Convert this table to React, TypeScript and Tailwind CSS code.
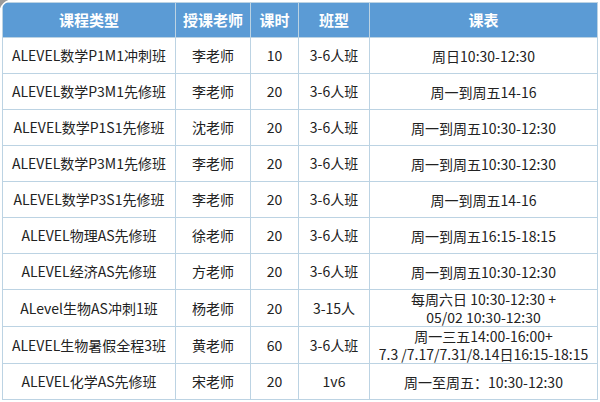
const rows: { name: string; teacher: string; hours: string; size: string; schedule: string[] }[] = [
  { name: 'ALEVEL数学P1M1冲刺班', teacher: '李老师', hours: '10', size: '3-6人班', schedule: ['周日10:30-12:30'] },
  { name: 'ALEVEL数学P3M1先修班', teacher: '李老师', hours: '20', size: '3-6人班', schedule: ['周一到周五14-16'] },
  { name: 'ALEVEL数学P1S1先修班', teacher: '沈老师', hours: '20', size: '3-6人班', schedule: ['周一到周五10:30-12:30'] },
  { name: 'ALEVEL数学P3M1先修班', teacher: '李老师', hours: '20', size: '3-6人班', schedule: ['周一到周五10:30-12:30'] },
  { name: 'ALEVEL数学P3S1先修班', teacher: '李老师', hours: '20', size: '3-6人班', schedule: ['周一到周五14-16'] },
  { name: 'ALEVEL物理AS先修班', teacher: '徐老师', hours: '20', size: '3-6人班', schedule: ['周一到周五16:15-18:15'] },
  { name: 'ALEVEL经济AS先修班', teacher: '方老师', hours: '20', size: '3-6人班', schedule: ['周一到周五10:30-12:30'] },
  { name: 'ALevel生物AS冲刺1班', teacher: '杨老师', hours: '20', size: '3-15人', schedule: ['每周六日 10:30-12:30 +', '05/02 10:30-12:30'] },
  { name: 'ALEVEL生物暑假全程3班', teacher: '黄老师', hours: '60', size: '3-6人班', schedule: ['周一三五14:00-16:00+', '7.3 /7.17/7.31/8.14日16:15-18:15'] },
  { name: 'ALEVEL化学AS先修班', teacher: '宋老师', hours: '20', size: '1v6', schedule: ['周一至周五：10:30-12:30'] },
];

const headers = ['课程类型', '授课老师', '课时', '班型', '课表'];
const widths = ['w-[173px]', 'w-[75px]', 'w-[48px]', 'w-[71px]', 'w-[228px]'];

export default function App() {
  return (
    <div
      className="relative w-[600px] h-[402px] bg-white overflow-hidden pt-[2px] pl-[2px]"
      style={{ fontFamily: '"Noto Sans CJK SC", "Liberation Sans", sans-serif' }}
    >
      <table className="border-collapse table-fixed w-[595px] text-[14px] text-[#222]">
        <thead>
          <tr className="h-[35px] bg-[#5b9bd5]">
            {headers.map((h, i) => (
              <th key={h} className={`${widths[i]} border border-[#bcd3e3] text-white text-[15px] font-bold text-center p-0`}>
                {h}
              </th>
            ))}
          </tr>
        </thead>
        <tbody>
          {rows.map((r, idx) => (
            <tr key={idx} className="h-[36px]">
              <td className="border border-[#bcd3e3] text-center p-0 whitespace-nowrap">{r.name}</td>
              <td className="border border-[#bcd3e3] text-center p-0">{r.teacher}</td>
              <td className="border border-[#bcd3e3] text-center p-0">{r.hours}</td>
              <td className="border border-[#bcd3e3] text-center p-0">{r.size}</td>
              <td className="border border-[#bcd3e3] text-center p-0 leading-[18px] whitespace-nowrap">
                {r.schedule.map((s) => (
                  <div key={s}>{s}</div>
                ))}
              </td>
            </tr>
          ))}
        </tbody>
      </table>

      {/* window corner */}
      <svg className="absolute left-0 top-0" width="14" height="14" viewBox="0 0 14 14">
        <path d="M0 0 H13 A13 13 0 0 0 0 13 Z" fill="#9b9b9b" />
        <path d="M13 0 A13 13 0 0 0 0 13" fill="none" stroke="#ffffff" strokeWidth="1.5" />
      </svg>
    </div>
  );
}
